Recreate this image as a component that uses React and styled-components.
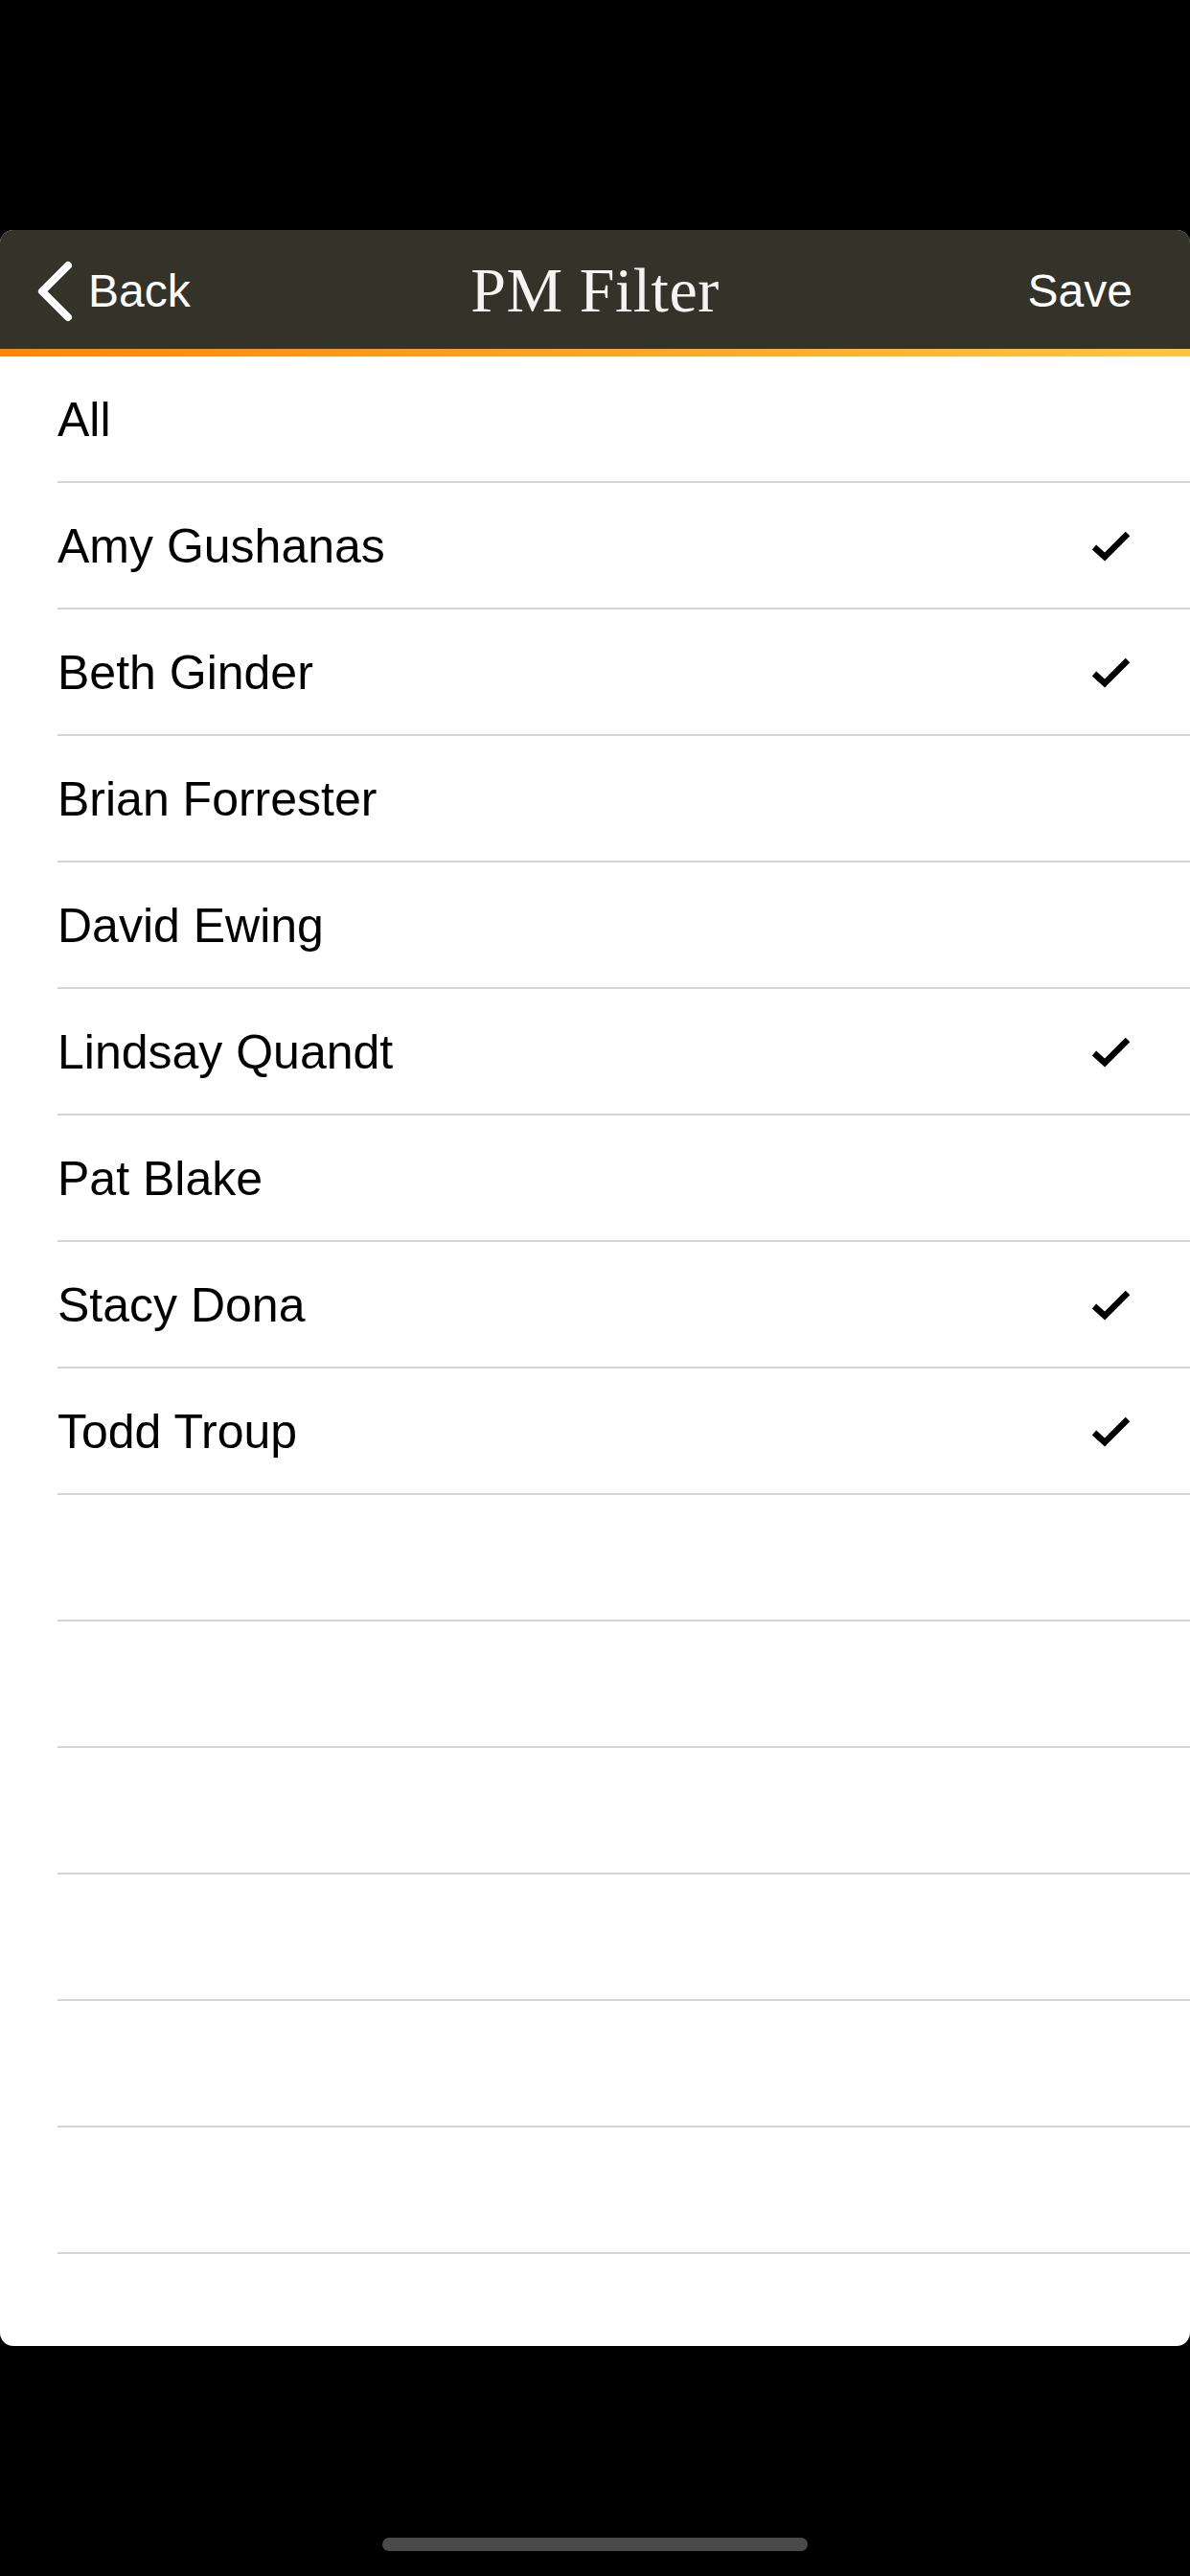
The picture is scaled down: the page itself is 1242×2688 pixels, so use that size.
import React from 'react'
import styled, { createGlobalStyle } from 'styled-components'

//data
const people = [
    { name: 'All', checked: false },
    { name: 'Amy Gushanas', checked: true },
    { name: 'Beth Ginder', checked: true },
    { name: 'Brian Forrester', checked: false },
    { name: 'David Ewing', checked: false },
    { name: 'Lindsay Quandt', checked: true },
    { name: 'Pat Blake', checked: false },
    { name: 'Stacy Dona', checked: true },
    { name: 'Todd Troup', checked: true },
]

//empty rows that fill the rest of the sheet
const emptyRows = 6

const ChevronLeft = () => (
    <svg width="40" height="64" viewBox="0 0 40 64" fill="none">
        <path d="M33 5 L6 32 L33 59" stroke="#fff" strokeWidth="8" strokeLinecap="round" strokeLinejoin="round" />
    </svg>
)

const Check = () => (
    <svg width="44" height="36" viewBox="0 0 44 36" fill="none">
        <path d="M4 19 L15 29 L39 5" stroke="#000" strokeWidth="6.5" strokeLinejoin="miter" />
    </svg>
)

const App = () => {
  return (
    <>
        <GlobalStyle />
        <Screen>
            <Sheet>
                <NavBar>
                    <BackButton>
                        <ChevronLeft />
                        <span>Back</span>
                    </BackButton>
                    <Title>PM Filter</Title>
                    <SaveButton>Save</SaveButton>
                </NavBar>
                <AccentBar />

                <List>
                    {people.map((p) => (
                        <Row key={p.name}>
                            <RowLabel>{p.name}</RowLabel>
                            {p.checked && <CheckSlot><Check /></CheckSlot>}
                        </Row>
                    ))}
                    {Array.from({ length: emptyRows }).map((_, i) => (
                        <Row key={'empty-' + i} />
                    ))}
                </List>
            </Sheet>

            <HomeIndicator />
        </Screen>
    </>
  )
}

//styles

const GlobalStyle = createGlobalStyle`
    html, body {
        margin: 0;
        padding: 0;
        background: #000;
    }

    * {
        box-sizing: border-box;
    }
`

const Screen = styled.div`
    width: 1242px;
    height: 2688px;
    background: #000;
    padding-top: 240px;
    display: flex;
    flex-direction: column;
    align-items: center;
    font-family: "Liberation Sans", Arial, sans-serif;
`

const Sheet = styled.div`
    width: 100%;
    height: 2208px;
    background: #fff;
    border-radius: 14px;
    overflow: hidden;
    display: flex;
    flex-direction: column;
`

const NavBar = styled.div`
    height: 124px;
    background: #33332a;
    display: grid;
    grid-template-columns: 1fr auto 1fr;
    align-items: center;
    padding: 0 38px;
    color: #fff;
`

const BackButton = styled.div`
    display: flex;
    align-items: center;
    gap: 14px;
    justify-self: start;
    font-size: 48px;
    padding-top: 2px;

    svg {
        margin-top: 2px;
    }
`

const Title = styled.div`
    font-family: "Liberation Serif", "Times New Roman", serif;
    font-size: 66px;
    font-weight: normal;
    letter-spacing: 0.5px;
    color: #f4f4f0;
    padding-top: 2px;
`

const SaveButton = styled.div`
    justify-self: end;
    font-size: 48px;
    margin-right: 22px;
    padding-top: 2px;
`

const AccentBar = styled.div`
    height: 8px;
    background: linear-gradient(90deg, #ff8606 0%, #ffa726 55%, #ffc53d 100%);
`

const List = styled.div`
    display: flex;
    flex-direction: column;
    padding-left: 60px;
`

const Row = styled.div`
    height: 132px;
    display: flex;
    align-items: center;
    justify-content: space-between;
    border-bottom: 2px solid #d4d4d4;
    padding-right: 60px;
    padding-top: 2px;
`

const RowLabel = styled.span`
    font-size: 50px;
    color: #000;
`

const CheckSlot = styled.span`
    display: flex;
    align-items: center;
`

const HomeIndicator = styled.div`
    margin-top: 200px;
    width: 444px;
    height: 14px;
    border-radius: 7px;
    background: #4a4a4a;
`

export default App
